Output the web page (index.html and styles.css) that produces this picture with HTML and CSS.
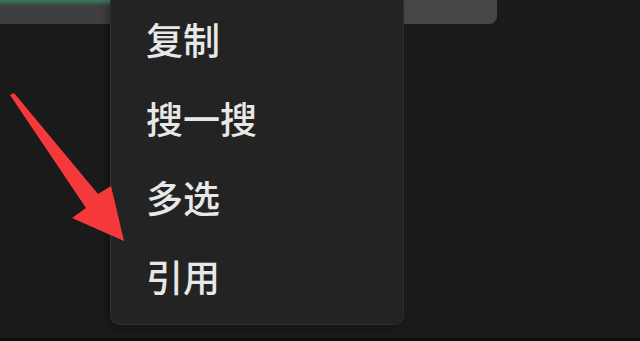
FILE: index.html
```html
<!DOCTYPE html>
<html lang="zh-CN">
<head>
    <meta charset="UTF-8">
    <meta name="viewport" content="width=device-width, initial-scale=1.0">
    <title>菜单</title>
    <link rel="stylesheet" href="styles.css">
</head>
<body>
    <div class="chat">
        <div class="bubble"></div>
    </div>
    <ul class="context-menu">
        <li>复制</li>
        <li>搜一搜</li>
        <li>多选</li>
        <li>引用</li>
    </ul>
    <svg class="pointer" width="140" height="250" viewBox="0 0 140 250">
        <path d="M10 95 L14 93 L98 194 L111 186 L124 241 L72 218 L86 208 Z" fill="#f5393b"/>
    </svg>
</body>
</html>
```

FILE: styles.css
```css
body {
    margin: 0;
    width: 640px;
    height: 341px;
    overflow: hidden;
    background-color: #1a1a1a;
    font-family: "Noto Sans CJK SC", "Noto Sans", sans-serif;
    position: relative;
    box-shadow: inset 0 -3px 0 #0f0f0f;
}
.bubble {
    width: 497px;
    height: 24px;
    background:
        linear-gradient(to bottom, #3b7a5a 0, #3a5e4c 3px, transparent 6px) 0 0 / 110px 100% no-repeat,
        linear-gradient(to right, #3e3e3e 0 110px, #474747 110px);
    border-radius: 0 0 8px 0;
}
.context-menu {
    position: absolute;
    left: 110px;
    top: 0;
    width: 292px;
    height: 314px;
    margin: 0;
    padding: 0 0 10px;
    list-style: none;
    background-color: #232323;
    border: 1px solid #303030;
    border-top: none;
    border-radius: 0 0 9px 9px;
    box-shadow: -3px 2px 6px rgba(0, 0, 0, 0.3);
}
.context-menu li {
    height: 79px;
    line-height: 79px;
    padding-left: 35px;
    font-size: 37px;
    font-weight: 500;
    color: #e8e8e8;
}
.pointer {
    position: absolute;
    left: 0;
    top: 0;
}
```
